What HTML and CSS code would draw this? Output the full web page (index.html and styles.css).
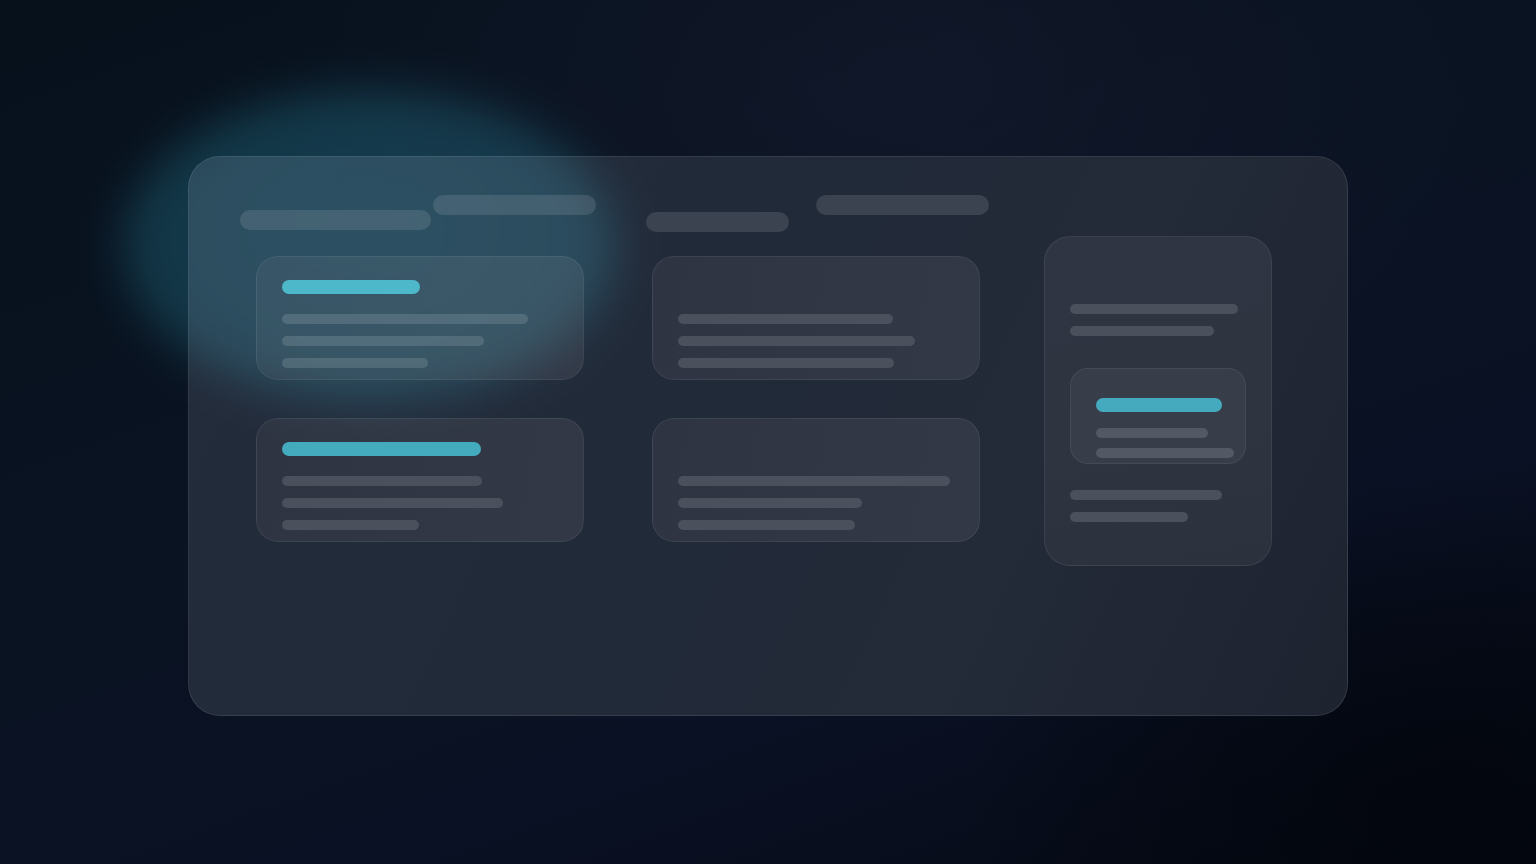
FILE: index.html
```html
<!DOCTYPE html>
<html lang="en">
<head>
<meta charset="utf-8">
<title>Skeleton board</title>
<link rel="stylesheet" href="styles.css">
</head>
<body>
<div class="stage">
  <div class="panel">
    <div class="col col-a">
      <div class="col-head">
        <span class="pill pill-low" style="width:191px"></span>
        <span class="pill" style="width:163px"></span>
      </div>
      <div class="cards cards-a">
        <div class="card">
          <span class="bar accent" style="width:138px"></span>
          <div class="lines">
            <span class="bar" style="width:246px"></span>
            <span class="bar" style="width:202px"></span>
            <span class="bar" style="width:146px"></span>
          </div>
        </div>
        <div class="card">
          <span class="bar accent" style="width:199px"></span>
          <div class="lines">
            <span class="bar" style="width:200px"></span>
            <span class="bar" style="width:221px"></span>
            <span class="bar" style="width:137px"></span>
          </div>
        </div>
      </div>
    </div>
    <div class="col col-b">
      <div class="col-head head-b">
        <span class="pill pill-low" style="width:143px"></span>
        <span class="pill" style="width:173px"></span>
      </div>
      <div class="cards cards-b">
        <div class="card">
          <span class="bar empty"></span>
          <div class="lines">
            <span class="bar" style="width:215px"></span>
            <span class="bar" style="width:237px"></span>
            <span class="bar" style="width:216px"></span>
          </div>
        </div>
        <div class="card">
          <span class="bar empty"></span>
          <div class="lines">
            <span class="bar" style="width:272px"></span>
            <span class="bar" style="width:184px"></span>
            <span class="bar" style="width:177px"></span>
          </div>
        </div>
      </div>
    </div>
    <div class="col col-c">
      <div class="tall-card">
        <div class="lines">
          <span class="bar" style="width:168px"></span>
          <span class="bar" style="width:144px"></span>
        </div>
        <div class="mini-card">
          <span class="bar accent" style="width:126px"></span>
          <div class="mini-lines">
            <span class="bar" style="width:112px"></span>
            <span class="bar" style="width:138px"></span>
          </div>
        </div>
        <div class="lines">
          <span class="bar" style="width:152px"></span>
          <span class="bar" style="width:118px"></span>
        </div>
      </div>
    </div>
  </div>
  <div class="glow"></div>
</div>
</body>
</html>
```

FILE: styles.css
```css
* { box-sizing: border-box; }

html, body {
  margin: 0;
  width: 1536px;
  height: 864px;
  overflow: hidden;
}

body {
  font-family: "Inter", "Liberation Sans", sans-serif;
  background:
    radial-gradient(ellipse 700px 500px at 1450px 820px, rgba(2, 5, 12, 0.9), rgba(2, 5, 12, 0) 70%),
    radial-gradient(ellipse 900px 600px at 900px 80px, rgba(22, 28, 48, 0.55), rgba(22, 28, 48, 0) 70%),
    linear-gradient(160deg, #07111c 0%, #0a1322 45%, #0a1124 70%, #050913 100%);
}

.stage {
  position: relative;
  width: 1536px;
  height: 864px;
  padding: 156px 188px;
}

.panel {
  width: 1160px;
  height: 560px;
  border-radius: 32px;
  border: 1px solid rgba(255, 255, 255, 0.09);
  background: linear-gradient(115deg, #232c3b 0%, #212a39 45%, #232a38 70%, #1e2330 100%);
  padding: 38px 0 0 51px;
  display: flex;
  align-items: flex-start;
}

.col { display: flex; flex-direction: column; }

.col-a { width: 356px; }
.col-b { width: 343px; margin-left: 50px; }
.col-c { margin-left: 55px; padding-top: 41px; }

.col-head {
  display: flex;
  align-items: flex-start;
  gap: 2px;
  height: 34px;
}
.head-b { gap: 27px; }

.pill {
  display: block;
  flex-shrink: 0;
  height: 20px;
  border-radius: 10px;
  background: #3b4250;
}
.pill-low { margin-top: 15px; }
.head-b .pill-low { margin-top: 17px; }

.cards {
  display: flex;
  flex-direction: column;
  gap: 38px;
  margin-top: 27px;
}
.cards-a { margin-left: 16px; }
.cards-b { margin-left: 6px; }

.card {
  width: 328px;
  height: 124px;
  border-radius: 22px;
  border: 1px solid rgba(255, 255, 255, 0.07);
  background: linear-gradient(100deg, #2e3442 0%, #313744 60%, #323846 100%);
  padding: 23px 25px 11px;
  display: flex;
  flex-direction: column;
  gap: 20px;
}

.bar {
  display: block;
  flex-shrink: 0;
  height: 10px;
  border-radius: 5px;
  background: #4a505c;
}
.bar.accent {
  height: 14px;
  border-radius: 7px;
  background: #44aabd;
}
.bar.empty {
  height: 14px;
  background: transparent;
}

.lines {
  display: flex;
  flex-direction: column;
  gap: 12px;
}

.tall-card {
  width: 228px;
  height: 330px;
  border-radius: 26px;
  border: 1px solid rgba(255, 255, 255, 0.07);
  background: linear-gradient(170deg, #303543 0%, #2f3441 60%, #2c313e 100%);
  padding: 67px 25px 0;
  display: flex;
  flex-direction: column;
}

.mini-card {
  width: 176px;
  height: 96px;
  flex-shrink: 0;
  margin: 32px 0 26px;
  border-radius: 18px;
  border: 1px solid rgba(255, 255, 255, 0.07);
  background: #383d4a;
  padding: 29px 0 0 25px;
  display: flex;
  flex-direction: column;
}
.mini-card .bar { background: #525864; }
.mini-card .bar.accent { background: #45aabd; }

.mini-lines {
  display: flex;
  flex-direction: column;
  gap: 10px;
  margin-top: 16px;
}

.glow {
  position: absolute;
  left: 122px;
  top: 90px;
  width: 494px;
  height: 312px;
  border-radius: 50%;
  background: radial-gradient(ellipse at 50% 45%, rgb(12, 44, 52) 0%, rgb(10, 40, 46) 60%, rgb(8, 32, 38) 85%, rgba(8, 32, 38, 0) 100%);
  filter: blur(22px);
  mix-blend-mode: screen;
  pointer-events: none;
}
```
